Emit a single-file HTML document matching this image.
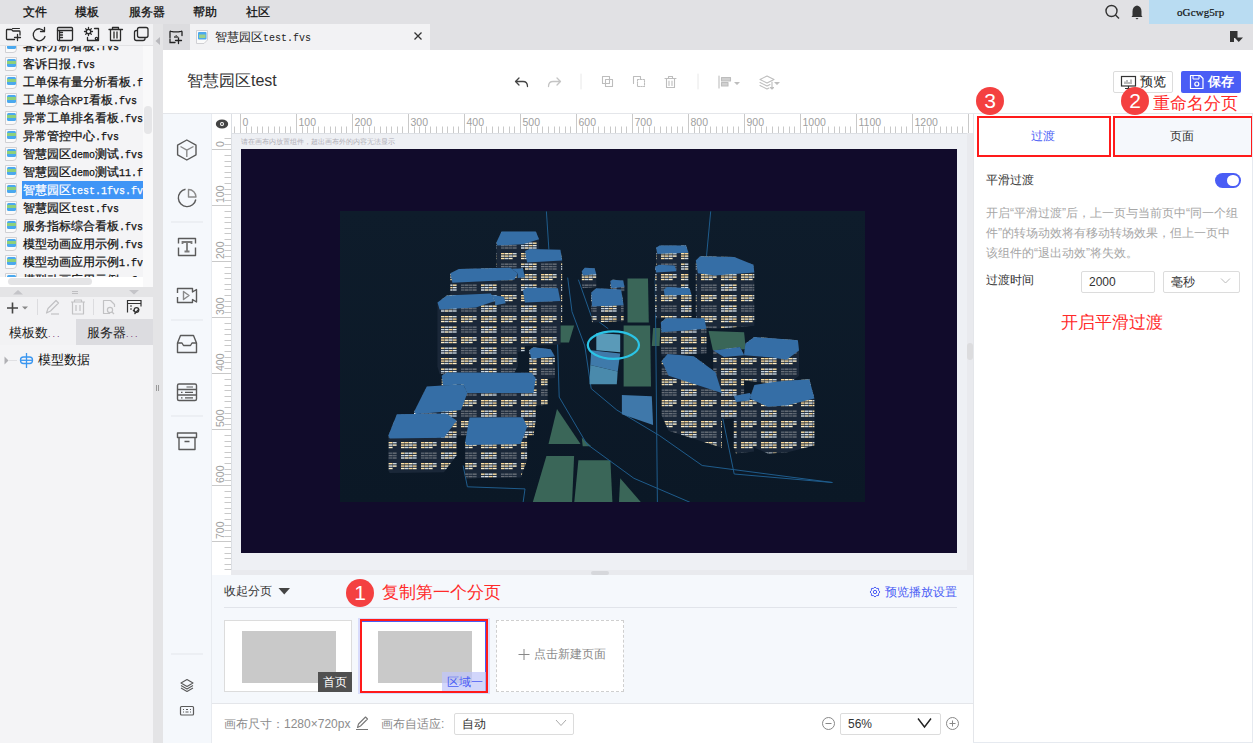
<!DOCTYPE html>
<html><head><meta charset="utf-8">
<style>
*{box-sizing:border-box;margin:0;padding:0}
html,body{width:1253px;height:743px;overflow:hidden;background:#fff;font-family:"Liberation Sans",sans-serif;color:#333}
.a{position:absolute}
.t{position:absolute;white-space:nowrap;line-height:1}
svg{position:absolute;overflow:visible}
.mono{font-family:"Liberation Mono",monospace}
.m{font-family:"Liberation Mono",monospace;font-size:10px;letter-spacing:0}
.li{left:23px;font-size:12px;-webkit-text-stroke:0.25px currentColor}
.fi{position:absolute;left:5px;width:12px;height:14px;background:#fafafa;border:1px solid #d0d0d4;border-bottom-right-radius:4px}
.fi i{position:absolute;left:1px;top:1px;width:8.5px;height:8px;background:linear-gradient(#4aa8ee 0,#4aa8ee 2.5px,#8fd07a 2.5px,#8fd07a 5.5px,#4aa8ee 5.5px);border-radius:1.5px}
.badge{position:absolute;width:28px;height:28px;border-radius:14px;background:#f44040;color:#fff;font-size:21px;line-height:28px;text-align:center;font-family:"Liberation Sans",sans-serif}
</style></head><body>
<!-- menubar -->
<div class="a" style="left:0;top:0;width:1253px;height:24px;background:#e1e1e4"></div>
<div class="t" style="left:23px;top:6px;font-size:12px;color:#111;-webkit-text-stroke:0.3px #111">文件</div>
<div class="t" style="left:75px;top:6px;font-size:12px;color:#111;-webkit-text-stroke:0.3px #111">模板</div>
<div class="t" style="left:129px;top:6px;font-size:12px;color:#111;-webkit-text-stroke:0.3px #111">服务器</div>
<div class="t" style="left:193px;top:6px;font-size:12px;color:#111;-webkit-text-stroke:0.3px #111">帮助</div>
<div class="t" style="left:246px;top:6px;font-size:12px;color:#111;-webkit-text-stroke:0.3px #111">社区</div>
<div class="a" style="left:1149px;top:0;width:104px;height:24px;background:#b9dcf2"></div>
<div class="t" style="left:1177px;top:7px;font-size:11px;color:#111;font-family:'Liberation Serif',serif;letter-spacing:0.1px;-webkit-text-stroke:0.2px #111">oGcwg5rp</div>

<!-- row2 -->
<div class="a" style="left:0;top:24px;width:153px;height:22px;background:#f2f2f4;border-bottom:1px solid #e2e2e4"></div>
<div class="a" style="left:153px;top:24px;width:10px;height:719px;background:#e4e4e6"></div>
<div class="a" style="left:163px;top:24px;width:1090px;height:26px;background:#e1e1e4"></div>
<div class="a" style="left:190px;top:24px;width:240px;height:26px;background:#f2f2f4"></div>

<!-- left list -->
<div class="a" style="left:0;top:46px;width:143px;height:231px;background:#f4f4f6;overflow:hidden">
<div class="fi" style="top:-7px"><i></i></div>
<div class="t li" style="top:-6px;color:#111">客诉分析看板<span class="m">.fvs</span></div>
<div class="fi" style="top:11px"><i></i></div>
<div class="t li" style="top:12px;color:#111">客诉日报<span class="m">.fvs</span></div>
<div class="fi" style="top:29px"><i></i></div>
<div class="t li" style="top:30px;color:#111">工单保有量分析看板<span class="m">.f</span></div>
<div class="fi" style="top:47px"><i></i></div>
<div class="t li" style="top:48px;color:#111">工单综合<span class="m">KPI</span>看板<span class="m">.fvs</span></div>
<div class="fi" style="top:65px"><i></i></div>
<div class="t li" style="top:66px;color:#111">异常工单排名看板<span class="m">.fvs</span></div>
<div class="fi" style="top:83px"><i></i></div>
<div class="t li" style="top:84px;color:#111">异常管控中心<span class="m">.fvs</span></div>
<div class="fi" style="top:101px"><i></i></div>
<div class="t li" style="top:102px;color:#111">智慧园区<span class="m">demo</span>测试<span class="m">.fvs</span></div>
<div class="fi" style="top:119px"><i></i></div>
<div class="t li" style="top:120px;color:#111">智慧园区<span class="m">demo</span>测试<span class="m">11.f</span></div>
<div class="a" style="left:22px;top:135px;width:121px;height:18px;background:#3f95f6"></div>
<div class="fi" style="top:137px"><i></i></div>
<div class="t li" style="top:138px;color:#fff">智慧园区<span class="m">test.1fvs.fv</span></div>
<div class="fi" style="top:155px"><i></i></div>
<div class="t li" style="top:156px;color:#111">智慧园区<span class="m">test.fvs</span></div>
<div class="fi" style="top:173px"><i></i></div>
<div class="t li" style="top:174px;color:#111">服务指标综合看板<span class="m">.fvs</span></div>
<div class="fi" style="top:191px"><i></i></div>
<div class="t li" style="top:192px;color:#111">模型动画应用示例<span class="m">.fvs</span></div>
<div class="fi" style="top:209px"><i></i></div>
<div class="t li" style="top:210px;color:#111">模型动画应用示例<span class="m">1.fv</span></div>
<div class="fi" style="top:227px"><i></i></div>
<div class="t li" style="top:228px;color:#111">模型动画应用示例<span class="m">1.fvs</span></div>
</div>
<div class="a" style="left:143px;top:46px;width:10px;height:241px;background:#f9f9fa"></div>
<div class="a" style="left:144px;top:106px;width:8px;height:28px;border-radius:4px;background:#e6e6e8"></div>
<div class="a" style="left:0;top:277px;width:143px;height:10px;background:#fff"></div>
<div class="a" style="left:8px;top:278px;width:84px;height:7px;border-radius:4px;background:#e4e4e6"></div>
<div class="a" style="left:0;top:287px;width:153px;height:10px;background:#e4e4e6"></div>
<div class="a" style="left:0;top:297px;width:153px;height:22px;background:#f2f2f4"></div>
<div class="a" style="left:0;top:319px;width:76px;height:26px;background:#f2f2f4"></div>
<div class="a" style="left:76px;top:319px;width:77px;height:26px;background:#dcdce0"></div>
<div class="a" style="left:0;top:345px;width:153px;height:398px;background:#f4f4f6"></div>


<!-- left toolbar icons -->
<svg style="left:0;top:0" width="1253" height="743" viewBox="0 0 1253 743">
<g fill="none" stroke="#2b2b2b" stroke-width="1.3" stroke-linejoin="round" stroke-linecap="round">
 <path d="M14.5 39.5H7.2Q6.5 39.5 6.5 38.8V30.2Q6.5 29.5 7.2 29.5H11.5L13 31H19.3Q20 31 20 31.7V35"/>
 <path d="M12.5 28.5H19.5" stroke-width="1"/>
 <path d="M17.5 34.5V40.5M14.5 37.5H20.5"/>
 <path d="M44.3 31.5A6 6 0 1 0 45 36.5"/>
 <path d="M44.5 27.5V31.5H40.5" />
 <rect x="57.5" y="27.5" width="15" height="13" rx="1"/>
 <path d="M57.5 30.5H72.5M59.5 30.5V40.5M59.5 32.5H62.5M59.5 35H62.5M59.5 37.5H62.5"/>
 <path d="M87.5 37.5V40.5H98.5V28.5H94.5"/>
 <circle cx="88.5" cy="31.5" r="2.2"/>
 <path d="M88.5 27.5V28.8M88.5 34.2V35.5M84.5 31.5H85.8M91.2 31.5H92.5M85.7 28.7L86.6 29.6M90.4 33.4L91.3 34.3M85.7 34.3L86.6 33.4M90.4 29.6L91.3 28.7"/>
 <circle cx="96.5" cy="38.5" r="1.2"/>
 <path d="M109 29.5H122.5M112.5 29.5V27.5H118.5V29.5M110.5 29.5V40.5H120.5V29.5M114 32V38M117 32V38"/>
 <rect x="137.5" y="27.5" width="10.5" height="10" rx="2"/>
 <path d="M136.5 30.5Q134.5 30.5 134.5 32.5V38.5Q134.5 40.5 136.5 40.5H143Q145 40.5 145 38.5"/>
</g>
<path d="M160 37L155.5 41L160 45Z" fill="#b8b8bc"/>
</svg>


<!-- tab bar content -->
<div class="a" style="left:163px;top:24px;width:27px;height:26px;background:#dcdcdf"></div>
<div class="a" style="left:190px;top:25px;width:240px;height:25px;background:#f2f2f4"></div>
<svg style="left:0;top:0" width="1253" height="743" viewBox="0 0 1253 743">
<g fill="none" stroke="#222" stroke-width="1.3" stroke-linecap="round">
 <path d="M170 37.5V32Q170 31 171 31.3Q176 32.5 181 31.3Q182 31 182 32V35.5"/>
 <path d="M170 39V42.5H175"/>
 <path d="M178.5 37.5V43.5M175.5 40.5H181.5"/>
</g>
<path d="M172 38h2v-2h1.5v-1h1.5v1h1v1h1v1" fill="#666"/>
<path d="M196.5 30.5H207.5V40L204 43.5H196.5Z" fill="#fafafa" stroke="#d0d0d4"/>
<rect x="198" y="32" width="8.5" height="7.5" rx="1" fill="#4aa8ee"/>
<rect x="199" y="34.5" width="6.5" height="3.5" fill="#9bd08a"/>
<path d="M414.5 32.5L421.5 39.5M421.5 32.5L414.5 39.5" stroke="#333" stroke-width="1.3"/>
<path d="M1230 31h7.5v7h-3.5v4h-4z" fill="#333"/>
<path d="M1234.5 37.5h8.5l-4.25 4.5z" fill="#333"/>
<g fill="none" stroke="#333" stroke-width="1.4">
 <circle cx="1111.5" cy="11" r="5.5"/><path d="M1115.5 15L1119 18.5"/>
</g>
<path d="M1137 5.5Q1141.5 6.5 1141.5 11.5V15.5L1142.5 17H1131.5L1132.5 15.5V11.5Q1132.5 6.5 1137 5.5Z" fill="#333"/>
<path d="M1135.5 18h3l-1.5 1.5z" fill="#333"/>
</svg>
<div class="t" style="left:215px;top:31px;font-size:12px;color:#222">智慧园区<span class="m">test.fvs</span></div>


<!-- left bottom -->
<svg style="left:0;top:0" width="1253" height="743" viewBox="0 0 1253 743">
 <path d="M13 294.5L18 290L23 294.5Z" fill="#c4c4c8"/>
 <path d="M129 290H139L134 294.5Z" fill="#c4c4c8"/>
 <path d="M72 291.5H78M72 293.5H78" stroke="#b4b4b8" stroke-width="0.8"/>
 <path d="M12.5 302.5V313.5M7 308H18" stroke="#444" stroke-width="1.6"/>
 <path d="M22 306.5H28L25 309.5Z" fill="#888"/>
 <path d="M37.5 299V315M93.5 299V315" stroke="#dcdcdf" stroke-width="1"/>
 <g fill="none" stroke="#c2c2c4" stroke-width="1.2" stroke-linejoin="round">
  <path d="M46.5 313L48 308.5L56 300.5L58.5 303L50.5 311Z"/><path d="M51 314H59"/>
  <path d="M71 302H85M74.5 302V300H81.5V302M72.5 302V314H83.5V302M76 305V311M80 305V311"/>
  <path d="M110 313.5H103.5V300.5H110.5L114.5 304.5V307"/><circle cx="110" cy="310" r="2.6"/><path d="M112 312L114 314"/>
 </g>
 <g fill="none" stroke="#333" stroke-width="1.2">
  <path d="M127.5 312.5V300.5H141V306.5M127.5 303.5H141M130 306H132M130 309H132"/>
  <circle cx="136.5" cy="310" r="2.3"/><path d="M134.5 314L139 309M133 310L135 312"/>
 </g>
 <path d="M4.5 356.5L8.5 360.5L4.5 364.5Z" fill="#b0b0b4"/>
 <path d="M9 360.5H17" stroke="#e0e0e3" stroke-width="1"/>
 <g fill="none" stroke="#3a96f0" stroke-width="1.3">
  <path d="M26.5 353V368"/><rect x="20.5" y="357" width="12" height="6.5" rx="3"/>
  <path d="M21 360.3H32"/>
 </g>
</svg>
<div class="t" style="left:9px;top:326px;font-size:13px;color:#222">模板数<span style="color:#7a3a7a;font-size:9px;letter-spacing:2px">...</span></div>
<div class="t" style="left:87px;top:326px;font-size:13px;color:#222">服务器<span style="color:#7a3a7a;font-size:9px;letter-spacing:2px">...</span></div>
<div class="t" style="left:38px;top:353px;font-size:13px;color:#111">模型数据</div>
<div class="a" style="left:156px;top:385px;width:1px;height:6px;background:#999"></div>
<div class="a" style="left:158px;top:385px;width:1px;height:6px;background:#999"></div>

<!-- main header -->
<div class="a" style="left:163px;top:50px;width:1090px;height:64px;background:#fff;border-bottom:1px solid #e4e6ea"></div>
<div class="t" style="left:187px;top:73px;font-size:16px;color:#333">智慧园区test</div>


<!-- header toolbar -->
<svg style="left:0;top:0" width="1253" height="743" viewBox="0 0 1253 743">
<g fill="none" stroke-width="1.3" stroke-linecap="round" stroke-linejoin="round">
 <path d="M519 78L515.5 81.5L519 85M515.5 81.5H523Q527.5 81.5 527.5 86.5" stroke="#444"/>
 <path d="M557 78L560.5 81.5L557 85M560.5 81.5H553Q548.5 81.5 548.5 86.5" stroke="#c4c4c4"/>
 <path d="M581 74V89M698 74V89" stroke="#e8e8e8" stroke-width="1"/>
 <g stroke="#bdbdbd" stroke-width="1.1">
  <rect x="602.5" y="76.5" width="7" height="7"/><rect x="605.5" y="79.5" width="7" height="7"/>
  <path d="M633.5 83.5V76.5H640.5V79.5"/><path d="M637.5 79.5H644.5V86.5H637.5Z" stroke-dasharray="1.5 1.2"/>
  <path d="M665 78.5H676M668.5 78.5V76.5H672.5V78.5M666.5 78.5V87.5H674.5V78.5M669 81V85.5M672 81V85.5"/>
  <path d="M719 76V88"/><path d="M721.5 77.5H730.5V81H721.5ZM721.5 82.5H728V86H721.5Z" fill="#d0d0d0"/>
  <path d="M767 76L774 79.5L767 83L760 79.5Z"/><path d="M760 82.5L767 86L770 84.5M760 85.5L767 89L769 88"/><path d="M772 82V89M770.5 87.5L772 89L773.5 87.5"/>
 </g>
</g>
<path d="M734 82h6l-3 3z M774 82h6l-3 3z" fill="#bdbdbd"/>
</svg>
<div class="a" style="left:1113px;top:71px;width:60px;height:22px;border:1px solid #dcdcdc;border-radius:2px;background:#fff"></div>
<svg style="left:0;top:0" width="1253" height="743" viewBox="0 0 1253 743">
 <rect x="1121.5" y="76.5" width="14" height="9.5" fill="none" stroke="#333" stroke-width="1.2"/>
 <path d="M1125 88.5H1132M1128.5 86V88.5" stroke="#333" stroke-width="1.2"/>
 <path d="M1125 84V81.5M1127 84V80M1129 84V82M1131 84V79.5" stroke="#666" stroke-width="0.9"/>
</svg>
<div class="t" style="left:1140px;top:75px;font-size:13px;color:#222">预览</div>
<div class="a" style="left:1181px;top:71px;width:60px;height:22px;border-radius:2px;background:#4a5df5"></div>
<svg style="left:0;top:0" width="1253" height="743" viewBox="0 0 1253 743">
 <path d="M1190.5 75.5H1200L1203 78.5V88.5H1190.5Z" fill="none" stroke="#fff" stroke-width="1.2" stroke-linejoin="round"/>
 <path d="M1193 75.5V79H1199V75.5" fill="none" stroke="#fff" stroke-width="1"/>
 <circle cx="1196.8" cy="84" r="2" fill="none" stroke="#fff" stroke-width="1.2"/>
</svg>
<div class="t" style="left:1208px;top:75px;font-size:13px;color:#fff;font-weight:bold">保存</div>

<!-- icon sidebar -->
<div class="a" style="left:163px;top:114px;width:49px;height:629px;background:#f5f8fc;border-right:1px solid #e8ebf0"></div>


<!-- sidebar icons -->
<svg style="left:0;top:0" width="1253" height="743" viewBox="0 0 1253 743">
<g fill="none" stroke="#5a5a5a" stroke-width="1.4" stroke-linejoin="round">
 <path d="M186.8 140L196 145.2V154.8L186.8 160L177.6 154.8V145.2Z"/>
 <path d="M180.5 146.5L186.8 150.2L193.5 146.5M186.8 150.2V157" stroke="#8a8a8a"/>
 <path d="M186.5 189A9 9 0 1 0 196 198H186.5Z" stroke="none"/>
 <path d="M185.5 189.2A8.8 8.8 0 1 0 195.8 199.5"/>
 <path d="M188.5 189.5V197H196A7.5 7.5 0 0 0 188.5 189.5Z" stroke="#8a8a8a"/>
 <path d="M222 222" />
 <path d="M178.5 243.5V238.5H195.5V243.5M178.5 247.5V255.5H195.5V247.5"/>
 <path d="M182.5 244V242H191.5V244M187 242V251.5M184.5 251.5H189.5" stroke="#7a7a7a" stroke-width="1.8" stroke-linejoin="miter"/>
 <path d="M177.5 293V288.5H192.5V292L196.5 289.5V302L192.5 299.5V302.5H177.5V297"/>
 <path d="M183.5 291.5L189 295.5L183.5 299.5Z" stroke="#8a8a8a"/>
 <path d="M177.5 343V352.5H196.5V343L193.5 335.5H180.5Z"/>
 <path d="M177.5 343H182L183.5 345.5H190.5L192 343H196.5"/>
 <rect x="177.5" y="384" width="19" height="16.5" rx="1.5"/>
 <path d="M177.5 389.5H196.5M177.5 395H196.5"/>
 <path d="M186.5 387H193M181 392.3H182.5M185 392.3H193M181 397.8H182.5M185 397.8H193" stroke-width="1.2"/>
 <path d="M177.5 433V437.5H196.5V433Z"/>
 <path d="M179 437.5V449.5H195V437.5M184.5 441.5H189.5"/>
 <path d="M187 679.5L193 683L187 686.5L181 683Z" stroke-width="1.1"/>
 <path d="M181 685.5L187 689L193 685.5M181 688L187 691.5L193 688" stroke-width="1.1"/>
 <rect x="180.5" y="706.5" width="13" height="8.5" rx="1" stroke-width="1.2"/>
 <path d="M183 709.5H184M186 709.5H188M190 709.5H191M183 712H184M185.5 712H188.5M190 712H191" stroke-width="1"/>
</g>
<path d="M171 222H203M171 320H203M171 416H203M171 654H203" stroke="#e3e6eb" stroke-width="1"/>
</svg>

<!-- canvas area -->
<div class="a" style="left:212px;top:114px;width:761px;height:461px;background:#eef0f4"></div>
<div class="a" style="left:212px;top:114px;width:761px;height:20px;background:#fff;border-bottom:1px solid #dcdfe4"></div>
<div class="a" style="left:212px;top:114px;width:20px;height:461px;background:#fff;border-right:1px solid #dcdfe4"></div>
<div class="a" style="left:241px;top:149px;width:716px;height:404px;background:#110b2b"></div>
<!-- city start -->
<svg style="left:0;top:0" width="1253" height="743" viewBox="0 0 1253 743">
<defs>
<clipPath id="cimg"><rect x="340" y="211" width="525" height="291"/></clipPath>
<pattern id="win" width="40" height="21" patternUnits="userSpaceOnUse">
 <rect width="40" height="21" fill="#1a2738"/>
 <rect x="1" y="1.0" width="3.6" height="1.4" fill="#ffe3a6"/>
 <rect x="5" y="1.0" width="3.6" height="1.4" fill="#f6d494"/>
 <rect x="9" y="1.0" width="3.6" height="1.4" fill="#fff0c8"/>
 <rect x="13" y="1.0" width="3.6" height="1.4" fill="#c8d4dc"/>
 <rect x="1" y="3.4" width="3.6" height="1.4" fill="#f6d494"/>
 <rect x="5" y="3.4" width="3.6" height="1.4" fill="#fff0c8"/>
 <rect x="9" y="3.4" width="3.6" height="1.4" fill="#dfe6ea"/>
 <rect x="13" y="3.4" width="3.6" height="1.4" fill="#f6d494"/>
 <rect x="1" y="5.8" width="3.6" height="1.4" fill="#fff0c8"/>
 <rect x="5" y="5.8" width="3.6" height="1.4" fill="#c8d4dc"/>
 <rect x="9" y="5.8" width="3.6" height="1.4" fill="#f6d494"/>
 <rect x="13" y="5.8" width="3.6" height="1.4" fill="#fff0c8"/>
 <rect x="21" y="1.0" width="3.6" height="1.4" fill="#f6d494"/>
 <rect x="25" y="1.0" width="3.6" height="1.4" fill="#fff0c8"/>
 <rect x="29" y="1.0" width="3.6" height="1.4" fill="#ffe3a6"/>
 <rect x="33" y="1.0" width="3.6" height="1.4" fill="#c8d4dc"/>
 <rect x="21" y="3.4" width="3.6" height="1.4" fill="#fff0c8"/>
 <rect x="25" y="3.4" width="3.6" height="1.4" fill="#ffe3a6"/>
 <rect x="29" y="3.4" width="3.6" height="1.4" fill="#dfe6ea"/>
 <rect x="33" y="3.4" width="3.6" height="1.4" fill="#fff0c8"/>
 <rect x="21" y="5.8" width="3.6" height="1.4" fill="#ffe3a6"/>
 <rect x="25" y="5.8" width="3.6" height="1.4" fill="#c8d4dc"/>
 <rect x="29" y="5.8" width="3.6" height="1.4" fill="#fff0c8"/>
 <rect x="1" y="11.5" width="3.6" height="1.4" fill="#ffe3a6"/>
 <rect x="5" y="11.5" width="3.6" height="1.4" fill="#c8d4dc"/>
 <rect x="9" y="11.5" width="3.6" height="1.4" fill="#dfe6ea"/>
 <rect x="13" y="11.5" width="3.6" height="1.4" fill="#ffe3a6"/>
 <rect x="1" y="13.9" width="3.6" height="1.4" fill="#c8d4dc"/>
 <rect x="5" y="13.9" width="3.6" height="1.4" fill="#dfe6ea"/>
 <rect x="9" y="13.9" width="3.6" height="1.4" fill="#f6d494"/>
 <rect x="13" y="13.9" width="3.6" height="1.4" fill="#dfe6ea"/>
 <rect x="1" y="16.3" width="3.6" height="1.4" fill="#dfe6ea"/>
 <rect x="5" y="16.3" width="3.6" height="1.4" fill="#fff0c8"/>
 <rect x="9" y="16.3" width="3.6" height="1.4" fill="#dfe6ea"/>
 <rect x="13" y="16.3" width="3.6" height="1.4" fill="#c8d4dc"/>
 <rect x="21" y="11.5" width="3.6" height="1.4" fill="#5a6470"/>
 <rect x="25" y="11.5" width="3.6" height="1.4" fill="#6a7078"/>
 <rect x="29" y="11.5" width="3.6" height="1.4" fill="#5a6470"/>
 <rect x="33" y="11.5" width="3.6" height="1.4" fill="#6a7078"/>
 <rect x="21" y="13.9" width="3.6" height="1.4" fill="#6a7078"/>
 <rect x="25" y="13.9" width="3.6" height="1.4" fill="#5a6470"/>
 <rect x="29" y="13.9" width="3.6" height="1.4" fill="#6a7078"/>
 <rect x="33" y="13.9" width="3.6" height="1.4" fill="#5a6470"/>
 <rect x="21" y="16.3" width="3.6" height="1.4" fill="#5a6470"/>
 <rect x="25" y="16.3" width="3.6" height="1.4" fill="#6a7078"/>
 <rect x="29" y="16.3" width="3.6" height="1.4" fill="#5a6470"/>
 <rect x="33" y="16.3" width="3.6" height="1.4" fill="#6a7078"/>
</pattern>
<linearGradient id="bgg" x1="0" y1="0" x2="0" y2="1"><stop offset="0" stop-color="#0e1c2b"/><stop offset="1" stop-color="#0b1826"/></linearGradient>
</defs>
<g clip-path="url(#cimg)">
<rect x="340" y="211" width="525" height="291" fill="url(#bgg)"/>
<polygon points="627.5,278.4 648.0,278.4 648.8,322.4 627.5,322.4" fill="#3a6658"/>
<polygon points="623.6,325.4 650.1,325.4 651.0,386.5 623.6,386.5" fill="#3a6658"/>
<polygon points="560.4,325.4 574.1,325.4 569.0,342.5 560.4,342.5" fill="#3a6658"/>
<polygon points="708.6,331.0 744.1,332.2 745.8,349.3 712.9,350.2" fill="#3a6658"/>
<polygon points="653.1,328.0 660.4,328.0 659.5,345.9 651.8,345.9" fill="#3a6658"/>
<polygon points="557.0,409.1 580.5,444.1 548.5,444.1" fill="#3a6658"/>
<polygon points="581.8,437.7 591.2,446.2 582.7,446.2" fill="#3a6658"/>
<polygon points="546.4,456.1 574.1,456.1 572.0,503.9 532.3,503.9" fill="#3a6658"/>
<polygon points="578.4,460.3 610.4,460.3 612.5,503.9 574.1,503.9" fill="#3a6658"/>
<polygon points="620.2,478.3 642.4,503.9 618.9,503.9" fill="#3a6658"/>
<path d="M567.7 277.6 L572.0 311.7 L584.8 345.9 L591.2 388.6 L616.8 410.0 L659.5 435.6 L702.2 465.5 L832.4 482.5" fill="none" stroke="#1f5c8c" stroke-width="1"/>
<path d="M561.3 279.7 L557.0 324.6 L559.2 397.1 L586.9 444.1 L633.9 478.3 L693.7 503.9" fill="none" stroke="#1f5c8c" stroke-width="1"/>
<path d="M655.2 277.6 L657.4 503.9" fill="none" stroke="#1f5c8c" stroke-width="1"/>
<path d="M719.3 401.4 L734.2 474.0 L832.4 482.5" fill="none" stroke="#1f5c8c" stroke-width="1"/>
<path d="M463.1 465.5 L467.4 486.8 L525.0 488.9 L522.9 503.9" fill="none" stroke="#1f5c8c" stroke-width="1"/>
<path d="M546.4 211.4 L550.6 275.5" fill="none" stroke="#1f5c8c" stroke-width="1"/>
<path d="M710.7 211.4 L706.5 256.2" fill="none" stroke="#1f5c8c" stroke-width="1"/>
<path d="M578.4 279.7 L591.2 316.0 L608.3 328.8" fill="none" stroke="#1f5c8c" stroke-width="1"/>
<polygon points="596.3,333.1 620.2,334.4 620.2,352.3 596.3,350.2" fill="#5a9ab8"/>
<polygon points="591.2,350.2 620.2,353.6 617.7,371.5 590.3,365.1" fill="#3f7aaa"/>
<polygon points="590.3,365.1 617.7,371.5 616.8,384.3 589.5,384.3" fill="#4a8aac"/>
<polygon points="621.9,395.0 651.8,396.3 653.1,424.9 621.9,414.2" fill="#3f78aa"/>
<ellipse cx="613.4" cy="345.1" rx="25.6" ry="13.7" fill="none" stroke="#2bc4e6" stroke-width="2.2"/>
<polygon points="581.8,271.2 584.8,267.8 594.6,268.2 596.3,274.2 596.3,287.0 582.7,288.3 581.8,284.0" fill="url(#win)"/>
<polygon points="581.8,271.2 584.8,267.8 594.6,268.2 596.3,274.2 582.7,275.5" fill="#356ea6"/>
<polygon points="610.4,281.0 612.5,279.7 623.2,280.6 624.5,287.0 624.5,291.3 611.3,292.5 610.4,285.3" fill="url(#win)"/>
<polygon points="610.4,281.0 612.5,279.7 623.2,280.6 624.5,287.0 611.3,288.3" fill="#356ea6"/>
<polygon points="591.2,292.5 596.3,288.3 621.1,289.5 623.6,305.3 623.6,321.1 592.0,322.4 591.2,308.3" fill="url(#win)"/>
<polygon points="591.2,292.5 596.3,288.3 621.1,289.5 623.6,305.3 592.0,306.6" fill="#356ea6"/>
<polygon points="496.4,242.6 501.5,231.5 535.7,231.5 539.1,239.2 539.1,262.6 522.9,267.8 497.3,269.0 496.4,266.1" fill="url(#win)"/>
<polygon points="496.4,242.6 501.5,231.5 535.7,231.5 539.1,239.2 522.9,244.3 497.3,245.6" fill="#356ea6"/>
<polygon points="656.1,247.7 659.5,245.6 686.0,245.6 688.5,252.8 688.5,316.9 657.4,318.2 656.1,311.7" fill="url(#win)"/>
<polygon points="656.1,247.7 659.5,245.6 686.0,245.6 688.5,252.8 657.4,254.1" fill="#356ea6"/>
<polygon points="655.2,266.9 658.7,264.8 674.5,265.6 676.6,271.2 676.6,316.9 656.1,318.2 655.2,312.6" fill="url(#win)"/>
<polygon points="655.2,266.9 658.7,264.8 674.5,265.6 676.6,271.2 656.1,272.5" fill="#356ea6"/>
<polygon points="525.0,251.1 529.3,249.0 560.4,249.8 562.2,260.5 562.2,322.4 527.1,324.6 525.0,313.0" fill="url(#win)"/>
<polygon points="525.0,251.1 529.3,249.0 560.4,249.8 562.2,260.5 527.1,262.6" fill="#356ea6"/>
<polygon points="695.8,260.5 700.1,256.2 734.2,257.1 753.4,264.8 754.3,272.5 754.3,325.8 715.0,328.8 697.9,326.7 695.8,313.9" fill="url(#win)"/>
<polygon points="695.8,260.5 700.1,256.2 734.2,257.1 753.4,264.8 754.3,272.5 715.0,275.5 697.9,273.3" fill="#356ea6"/>
<polygon points="507.9,269.0 522.9,268.2 525.0,277.6 525.0,351.5 510.1,352.3 507.9,342.9" fill="url(#win)"/>
<polygon points="507.9,269.0 522.9,268.2 525.0,277.6 510.1,278.4" fill="#356ea6"/>
<polygon points="450.3,273.3 458.8,269.0 510.1,267.8 517.7,273.3 517.7,366.4 514.3,372.8 452.4,375.8 450.3,366.4" fill="url(#win)"/>
<polygon points="450.3,273.3 458.8,269.0 510.1,267.8 517.7,273.3 514.3,279.7 452.4,282.7" fill="#356ea6"/>
<polygon points="663.8,289.5 667.2,287.0 689.4,288.3 691.5,294.7 691.5,317.3 664.6,318.2 663.8,312.2" fill="url(#win)"/>
<polygon points="663.8,289.5 667.2,287.0 689.4,288.3 691.5,294.7 664.6,295.5" fill="#356ea6"/>
<polygon points="522.9,290.4 527.1,287.4 557.9,288.3 560.4,301.1 560.4,344.6 525.0,345.9 522.9,333.9" fill="url(#win)"/>
<polygon points="522.9,290.4 527.1,287.4 557.9,288.3 560.4,301.1 525.0,302.4" fill="#356ea6"/>
<polygon points="482.3,299.8 490.8,294.7 503.7,296.8 505.8,303.2 505.8,367.3 484.4,371.5 482.3,363.8" fill="url(#win)"/>
<polygon points="482.3,299.8 490.8,294.7 503.7,296.8 505.8,303.2 484.4,307.5" fill="#356ea6"/>
<polygon points="437.5,302.4 446.9,295.5 490.8,293.4 495.1,301.1 495.1,365.1 475.9,371.5 439.6,373.7 437.5,366.4" fill="url(#win)"/>
<polygon points="437.5,302.4 446.9,295.5 490.8,293.4 495.1,301.1 475.9,307.5 439.6,309.6" fill="#356ea6"/>
<polygon points="660.8,322.4 665.9,318.2 704.3,318.2 706.5,328.8 706.5,353.2 661.6,356.6 660.8,346.8" fill="url(#win)"/>
<polygon points="660.8,322.4 665.9,318.2 704.3,318.2 706.5,328.8 661.6,332.2" fill="#356ea6"/>
<polygon points="531.4,373.7 535.7,371.5 546.4,372.4 547.6,377.9 547.6,404.8 532.3,405.7 531.4,400.6" fill="url(#win)"/>
<polygon points="531.4,373.7 535.7,371.5 546.4,372.4 547.6,377.9 532.3,378.8" fill="#356ea6"/>
<polygon points="529.3,350.2 533.5,347.2 550.6,349.3 554.9,356.6 554.9,377.9 531.4,380.1 529.3,371.5" fill="url(#win)"/>
<polygon points="529.3,350.2 533.5,347.2 550.6,349.3 554.9,356.6 531.4,358.7" fill="#356ea6"/>
<polygon points="713.2,350.6 740.0,347.0 744.1,355.2 744.1,417.4 724.0,419.2 713.2,412.8" fill="url(#win)"/>
<polygon points="713.2,350.6 740.0,347.0 744.1,355.2 724.0,357.0" fill="#356ea6"/>
<polygon points="744.1,355.2 745.3,343.7 754.4,336.9 797.9,340.3 799.0,350.6 799.0,375.8 786.5,384.9 744.1,380.4" fill="url(#win)"/>
<polygon points="744.1,355.2 745.3,343.7 754.4,336.9 797.9,340.3 799.0,350.6 786.5,359.7 772.7,357.5" fill="#356ea6"/>
<polygon points="441.7,375.8 446.9,372.4 531.4,372.8 535.7,377.9 535.7,420.6 533.5,435.6 443.9,435.6 441.7,418.5" fill="url(#win)"/>
<polygon points="441.7,375.8 446.9,372.4 531.4,372.8 535.7,377.9 533.5,392.9 443.9,392.9" fill="#356ea6"/>
<polygon points="661.7,360.9 667.5,354.0 693.8,356.3 715.5,372.3 721.9,392.9 721.9,447.8 668.6,430.7 661.7,415.8" fill="url(#win)"/>
<polygon points="661.7,360.9 667.5,354.0 693.8,356.3 715.5,372.3 721.9,392.9 668.6,375.8" fill="#356ea6"/>
<polygon points="733.8,396.0 749.8,393.0 754.0,400.0 754.0,451.6 736.0,453.6 733.8,447.6" fill="url(#win)"/>
<polygon points="733.8,396.0 749.8,393.0 754.0,400.0 736.0,402.0" fill="#356ea6"/>
<polygon points="749.8,398.6 754.4,384.9 777.3,381.5 809.3,379.2 814.4,398.6 814.4,445.5 786.5,452.4 768.1,453.6 749.8,445.5" fill="url(#win)"/>
<polygon points="749.8,398.6 754.4,384.9 777.3,381.5 809.3,379.2 814.4,398.6 786.5,405.5 768.1,406.7" fill="#356ea6"/>
<polygon points="414.0,412.1 426.8,386.5 463.1,384.3 467.4,392.9 467.4,414.2 461.0,431.3 416.1,435.6 414.0,433.4" fill="url(#win)"/>
<polygon points="414.0,412.1 426.8,386.5 463.1,384.3 467.4,392.9 461.0,410.0 416.1,414.2" fill="#356ea6"/>
<polygon points="388.4,435.6 396.9,414.2 446.0,413.4 456.7,420.6 456.7,455.2 443.9,472.3 389.7,473.1 388.4,470.2" fill="url(#win)"/>
<polygon points="388.4,435.6 396.9,414.2 446.0,413.4 456.7,420.6 443.9,437.7 389.7,438.6" fill="#356ea6"/>
<polygon points="465.2,442.0 469.5,417.6 522.9,417.2 527.1,427.0 527.1,460.3 520.7,477.4 466.5,478.3 465.2,475.3" fill="url(#win)"/>
<polygon points="465.2,442.0 469.5,417.6 522.9,417.2 527.1,427.0 520.7,444.1 466.5,445.0" fill="#356ea6"/>
</g></svg>
<!-- city end -->

<!-- rulers -->
<svg style="left:0;top:0" width="1253" height="743" viewBox="0 0 1253 743">
<defs><clipPath id="hr"><rect x="232" y="114" width="741" height="19"/></clipPath><clipPath id="vr"><rect x="212" y="133" width="19" height="437"/></clipPath></defs>
<g clip-path="url(#hr)" stroke="#c9c9c9" stroke-width="1">
<path d="M234.5 126.5V133M240.5 114V133M246.5 126.5V133M251.5 126.5V133M257.5 126.5V133M262.5 126.5V133M268.5 126.5V133M274.5 126.5V133M279.5 126.5V133M285.5 126.5V133M290.5 126.5V133M296.5 114V133M302.5 126.5V133M307.5 126.5V133M313.5 126.5V133M318.5 126.5V133M324.5 126.5V133M330.5 126.5V133M335.5 126.5V133M341.5 126.5V133M346.5 126.5V133M352.5 114V133M358.5 126.5V133M363.5 126.5V133M369.5 126.5V133M374.5 126.5V133M380.5 126.5V133M386.5 126.5V133M391.5 126.5V133M397.5 126.5V133M402.5 126.5V133M408.5 114V133M414.5 126.5V133M419.5 126.5V133M425.5 126.5V133M430.5 126.5V133M436.5 126.5V133M442.5 126.5V133M447.5 126.5V133M453.5 126.5V133M458.5 126.5V133M464.5 114V133M470.5 126.5V133M475.5 126.5V133M481.5 126.5V133M486.5 126.5V133M492.5 126.5V133M498.5 126.5V133M503.5 126.5V133M509.5 126.5V133M514.5 126.5V133M520.5 114V133M526.5 126.5V133M531.5 126.5V133M537.5 126.5V133M542.5 126.5V133M548.5 126.5V133M554.5 126.5V133M559.5 126.5V133M565.5 126.5V133M570.5 126.5V133M576.5 114V133M582.5 126.5V133M587.5 126.5V133M593.5 126.5V133M598.5 126.5V133M604.5 126.5V133M610.5 126.5V133M615.5 126.5V133M621.5 126.5V133M626.5 126.5V133M632.5 114V133M638.5 126.5V133M643.5 126.5V133M649.5 126.5V133M654.5 126.5V133M660.5 126.5V133M666.5 126.5V133M671.5 126.5V133M677.5 126.5V133M682.5 126.5V133M688.5 114V133M694.5 126.5V133M699.5 126.5V133M705.5 126.5V133M710.5 126.5V133M716.5 126.5V133M722.5 126.5V133M727.5 126.5V133M733.5 126.5V133M738.5 126.5V133M744.5 114V133M750.5 126.5V133M755.5 126.5V133M761.5 126.5V133M766.5 126.5V133M772.5 126.5V133M778.5 126.5V133M783.5 126.5V133M789.5 126.5V133M794.5 126.5V133M800.5 114V133M806.5 126.5V133M811.5 126.5V133M817.5 126.5V133M822.5 126.5V133M828.5 126.5V133M834.5 126.5V133M839.5 126.5V133M845.5 126.5V133M850.5 126.5V133M856.5 114V133M862.5 126.5V133M867.5 126.5V133M873.5 126.5V133M878.5 126.5V133M884.5 126.5V133M890.5 126.5V133M895.5 126.5V133M901.5 126.5V133M906.5 126.5V133M912.5 114V133M918.5 126.5V133M923.5 126.5V133M929.5 126.5V133M934.5 126.5V133M940.5 126.5V133M946.5 126.5V133M951.5 126.5V133M957.5 126.5V133M962.5 126.5V133M968.5 114V133M974.5 126.5V133"/></g>
<g clip-path="url(#hr)" font-family="Liberation Sans" font-size="10.5" fill="#a0a0a0">
<text x="242.5" y="125.5">0</text>
<text x="298.5" y="125.5">100</text>
<text x="354.5" y="125.5">200</text>
<text x="410.5" y="125.5">300</text>
<text x="466.5" y="125.5">400</text>
<text x="522.5" y="125.5">500</text>
<text x="578.5" y="125.5">600</text>
<text x="634.5" y="125.5">700</text>
<text x="690.5" y="125.5">800</text>
<text x="746.5" y="125.5">900</text>
<text x="802.5" y="125.5">1000</text>
<text x="858.5" y="125.5">1100</text>
<text x="914.5" y="125.5">1200</text>
</g>
<g clip-path="url(#vr)" stroke="#c9c9c9" stroke-width="1">
<path d="M224.5 138.5H231M224.5 144.5H231M212 149.5H231M224.5 155.5H231M224.5 161.5H231M224.5 166.5H231M224.5 172.5H231M224.5 177.5H231M224.5 183.5H231M224.5 189.5H231M224.5 194.5H231M224.5 200.5H231M212 205.5H231M224.5 211.5H231M224.5 217.5H231M224.5 222.5H231M224.5 228.5H231M224.5 233.5H231M224.5 239.5H231M224.5 245.5H231M224.5 250.5H231M224.5 256.5H231M212 261.5H231M224.5 267.5H231M224.5 273.5H231M224.5 278.5H231M224.5 284.5H231M224.5 289.5H231M224.5 295.5H231M224.5 301.5H231M224.5 306.5H231M224.5 312.5H231M212 317.5H231M224.5 323.5H231M224.5 329.5H231M224.5 334.5H231M224.5 340.5H231M224.5 345.5H231M224.5 351.5H231M224.5 357.5H231M224.5 362.5H231M224.5 368.5H231M212 373.5H231M224.5 379.5H231M224.5 385.5H231M224.5 390.5H231M224.5 396.5H231M224.5 401.5H231M224.5 407.5H231M224.5 413.5H231M224.5 418.5H231M224.5 424.5H231M212 429.5H231M224.5 435.5H231M224.5 441.5H231M224.5 446.5H231M224.5 452.5H231M224.5 457.5H231M224.5 463.5H231M224.5 469.5H231M224.5 474.5H231M224.5 480.5H231M212 485.5H231M224.5 491.5H231M224.5 497.5H231M224.5 502.5H231M224.5 508.5H231M224.5 513.5H231M224.5 519.5H231M224.5 525.5H231M224.5 530.5H231M224.5 536.5H231M212 541.5H231M224.5 547.5H231M224.5 553.5H231M224.5 558.5H231M224.5 564.5H231M224.5 569.5H231"/></g>
<g clip-path="url(#vr)" font-family="Liberation Sans" font-size="10.5" fill="#a0a0a0">
<text transform="translate(223.5 147) rotate(-90)">0</text>
<text transform="translate(223.5 203) rotate(-90)">100</text>
<text transform="translate(223.5 259) rotate(-90)">200</text>
<text transform="translate(223.5 315) rotate(-90)">300</text>
<text transform="translate(223.5 371) rotate(-90)">400</text>
<text transform="translate(223.5 427) rotate(-90)">500</text>
<text transform="translate(223.5 483) rotate(-90)">600</text>
<text transform="translate(223.5 539) rotate(-90)">700</text>
</g>
<ellipse cx="222" cy="124" rx="6.2" ry="4.5" fill="#444"/><circle cx="222" cy="124" r="2" fill="#fff"/><circle cx="222" cy="124" r="1" fill="#444"/>
</svg>
<div class="t" style="left:241px;top:139px;font-size:6.5px;color:#aeaeb6">请在画布内放置组件，超出画布外的内容无法显示</div>

<!-- pages strip -->
<div class="a" style="left:212px;top:575px;width:761px;height:128px;background:#f5f8fc"></div>
<div class="a" style="left:212px;top:703px;width:761px;height:40px;background:#fff;border-top:1px solid #e4e6ea"></div>


<!-- pages strip content -->
<div class="a" style="left:967px;top:133px;width:6px;height:442px;background:#e9eaee"></div>
<div class="a" style="left:231px;top:570px;width:742px;height:5px;background:#e9eaee"></div>
<div class="a" style="left:591px;top:571px;width:18px;height:4px;border-radius:2px;background:#d6d7db"></div>
<div class="a" style="left:967px;top:343px;width:6px;height:17px;border-radius:3px;background:#dcdcde"></div>
<div class="t" style="left:224px;top:585px;font-size:12px;color:#333">收起分页</div>
<svg style="left:0;top:0" width="1253" height="743" viewBox="0 0 1253 743">
 <path d="M278.5 588H290L284.25 594.5Z" fill="#444"/>
 <path d="M224 607.5H957" stroke="#e1e4ea" stroke-width="1"/>
 <g fill="none" stroke="#4a5df5" stroke-width="1">
  <path d="M880.00 592.00 L878.60 593.49 L878.54 595.54 L876.49 595.60 L875.00 597.00 L873.51 595.60 L871.46 595.54 L871.40 593.49 L870.00 592.00 L871.40 590.51 L871.46 588.46 L873.51 588.40 L875.00 587.00 L876.49 588.40 L878.54 588.46 L878.60 590.51Z" stroke-linejoin="round"/><circle cx="875" cy="592" r="1.7"/>
 </g>
</svg>
<div class="t" style="left:885px;top:586px;font-size:12px;color:#4a5df5">预览播放设置</div>

<div class="a" style="left:224px;top:620px;width:128px;height:72px;background:#fff;border:1px solid #dcdcdc"></div>
<div class="a" style="left:242px;top:631px;width:94px;height:52px;background:#c9c9c9"></div>
<div class="a" style="left:318px;top:672px;width:34px;height:20px;background:#505050"></div>
<div class="t" style="left:323px;top:676px;font-size:12px;color:#fff">首页</div>

<div class="a" style="left:358px;top:618px;width:132px;height:76px;background:#d8dcfc"></div>
<div class="a" style="left:360px;top:619px;width:128px;height:74px;background:#fff;border:2px solid #ff1a1a"></div>
<div class="a" style="left:362px;top:621px;width:124px;height:70px;border:1px solid #4a5df5;border-width:1px 1px 0 0"></div>
<div class="a" style="left:378px;top:631px;width:94px;height:52px;background:#c9c9c9"></div>
<div class="a" style="left:442px;top:672px;width:44px;height:19px;background:rgba(192,198,250,0.72)"></div>
<div class="t" style="left:447px;top:676px;font-size:12px;color:#4a5df5">区域一</div>

<div class="a" style="left:496px;top:620px;width:128px;height:72px;background:#fff;border:1px dashed #cfcfcf"></div>
<svg style="left:0;top:0" width="1253" height="743" viewBox="0 0 1253 743">
 <path d="M524 649V660M518.5 654.5H529.5" stroke="#888" stroke-width="1"/>
</svg>
<div class="t" style="left:534px;top:648px;font-size:12px;color:#8a8a8a">点击新建页面</div>

<!-- bottom bar -->
<div class="t" style="left:224px;top:718px;font-size:12px;color:#8c8c8c">画布尺寸：1280×720px</div>
<svg style="left:0;top:0" width="1253" height="743" viewBox="0 0 1253 743">
 <path d="M357.5 727.5L358.5 724L365.5 717L367.5 719L360.5 726Z M356 729.5H368" fill="none" stroke="#777" stroke-width="1.1" stroke-linejoin="round"/>
 <g fill="none" stroke="#888" stroke-width="1">
  <circle cx="828.5" cy="723.5" r="6"/><path d="M825.5 723.5H831.5"/>
  <circle cx="952.5" cy="723.5" r="6"/><path d="M949.5 723.5H955.5M952.5 720.5V726.5"/>
 </g>
</svg>
<div class="t" style="left:381px;top:718px;font-size:12px;color:#8c8c8c">画布自适应:</div>
<div class="a" style="left:454px;top:713px;width:120px;height:22px;border:1px solid #dcdcdc;border-radius:2px;background:#fff"></div>
<div class="t" style="left:462px;top:718px;font-size:12px;color:#333">自动</div>
<div class="a" style="left:840px;top:713px;width:101px;height:22px;border:1px solid #dcdcdc;border-radius:2px;background:#fff"></div>
<div class="t" style="left:848px;top:718px;font-size:12px;color:#333">56%</div>
<svg style="left:0;top:0" width="1253" height="743" viewBox="0 0 1253 743">
 <path d="M556 720L561 725.5L566 720" fill="none" stroke="#aaa" stroke-width="1"/>
 <path d="M918 718.5L924.5 727L931 718.5" fill="none" stroke="#222" stroke-width="1.4"/>
</svg>

<!-- right panel -->
<div class="a" style="left:973px;top:114px;width:280px;height:629px;background:#fff;border-left:1px solid #e4e6ea"></div>


<!-- right panel content -->
<div class="a" style="left:1113px;top:117px;width:140px;height:40px;background:#f5f8fc"></div>
<div class="a" style="left:977px;top:116px;width:134px;height:41px;border:2px solid #ff1a1a"></div>
<div class="a" style="left:1113px;top:116px;width:140px;height:41px;border:2px solid #ff1a1a"></div>
<div class="t" style="left:1031px;top:130px;font-size:12px;color:#4a5df5">过渡</div>
<div class="t" style="left:1170px;top:130px;font-size:12px;color:#333">页面</div>
<div class="t" style="left:986px;top:174px;font-size:12px;color:#333">平滑过渡</div>
<div class="a" style="left:1215px;top:173px;width:26px;height:15px;border-radius:8px;background:#4a5df5"></div>
<div class="a" style="left:1227px;top:175px;width:12px;height:11px;border-radius:6px;background:#fff"></div>
<div class="t" style="left:986px;top:203px;font-size:12px;color:#a6a6a6;line-height:20px">开启“平滑过渡”后，上一页与当前页中“同一个组<br>件”的转场动效将有移动转场效果，但上一页中<br>该组件的“退出动效”将失效。</div>
<div class="t" style="left:986px;top:274px;font-size:12px;color:#333">过渡时间</div>
<div class="a" style="left:1081px;top:271px;width:74px;height:22px;border:1px solid #dcdcdc;border-radius:2px;background:#fff"></div>
<div class="t" style="left:1089px;top:276px;font-size:12px;color:#333">2000</div>
<div class="a" style="left:1163px;top:271px;width:77px;height:22px;border:1px solid #dcdcdc;border-radius:2px;background:#fff"></div>
<div class="t" style="left:1171px;top:276px;font-size:12px;color:#333">毫秒</div>
<svg style="left:0;top:0" width="1253" height="743" viewBox="0 0 1253 743">
 <path d="M1221 278.5L1225.5 283L1230 278.5" fill="none" stroke="#bbb" stroke-width="1"/>
</svg>
<div class="t" style="left:1061px;top:314px;font-size:17px;color:#ff2a2a">开启平滑过渡</div>

<div class="a" style="left:1252px;top:114px;width:1px;height:629px;background:#e6eaf0"></div>
<div class="a" style="left:973px;top:742px;width:280px;height:1px;background:#e6eaf0"></div>
<!-- badges -->
<div class="badge" style="left:976px;top:87px">3</div>
<div class="badge" style="left:1121px;top:87px">2</div>
<div class="badge" style="left:346px;top:579px">1</div>
<div class="t" style="left:1153px;top:95px;font-size:17px;color:#ff2a2a">重命名分页</div>
<div class="t" style="left:382px;top:584px;font-size:17px;color:#ff2a2a">复制第一个分页</div>

</body></html>
